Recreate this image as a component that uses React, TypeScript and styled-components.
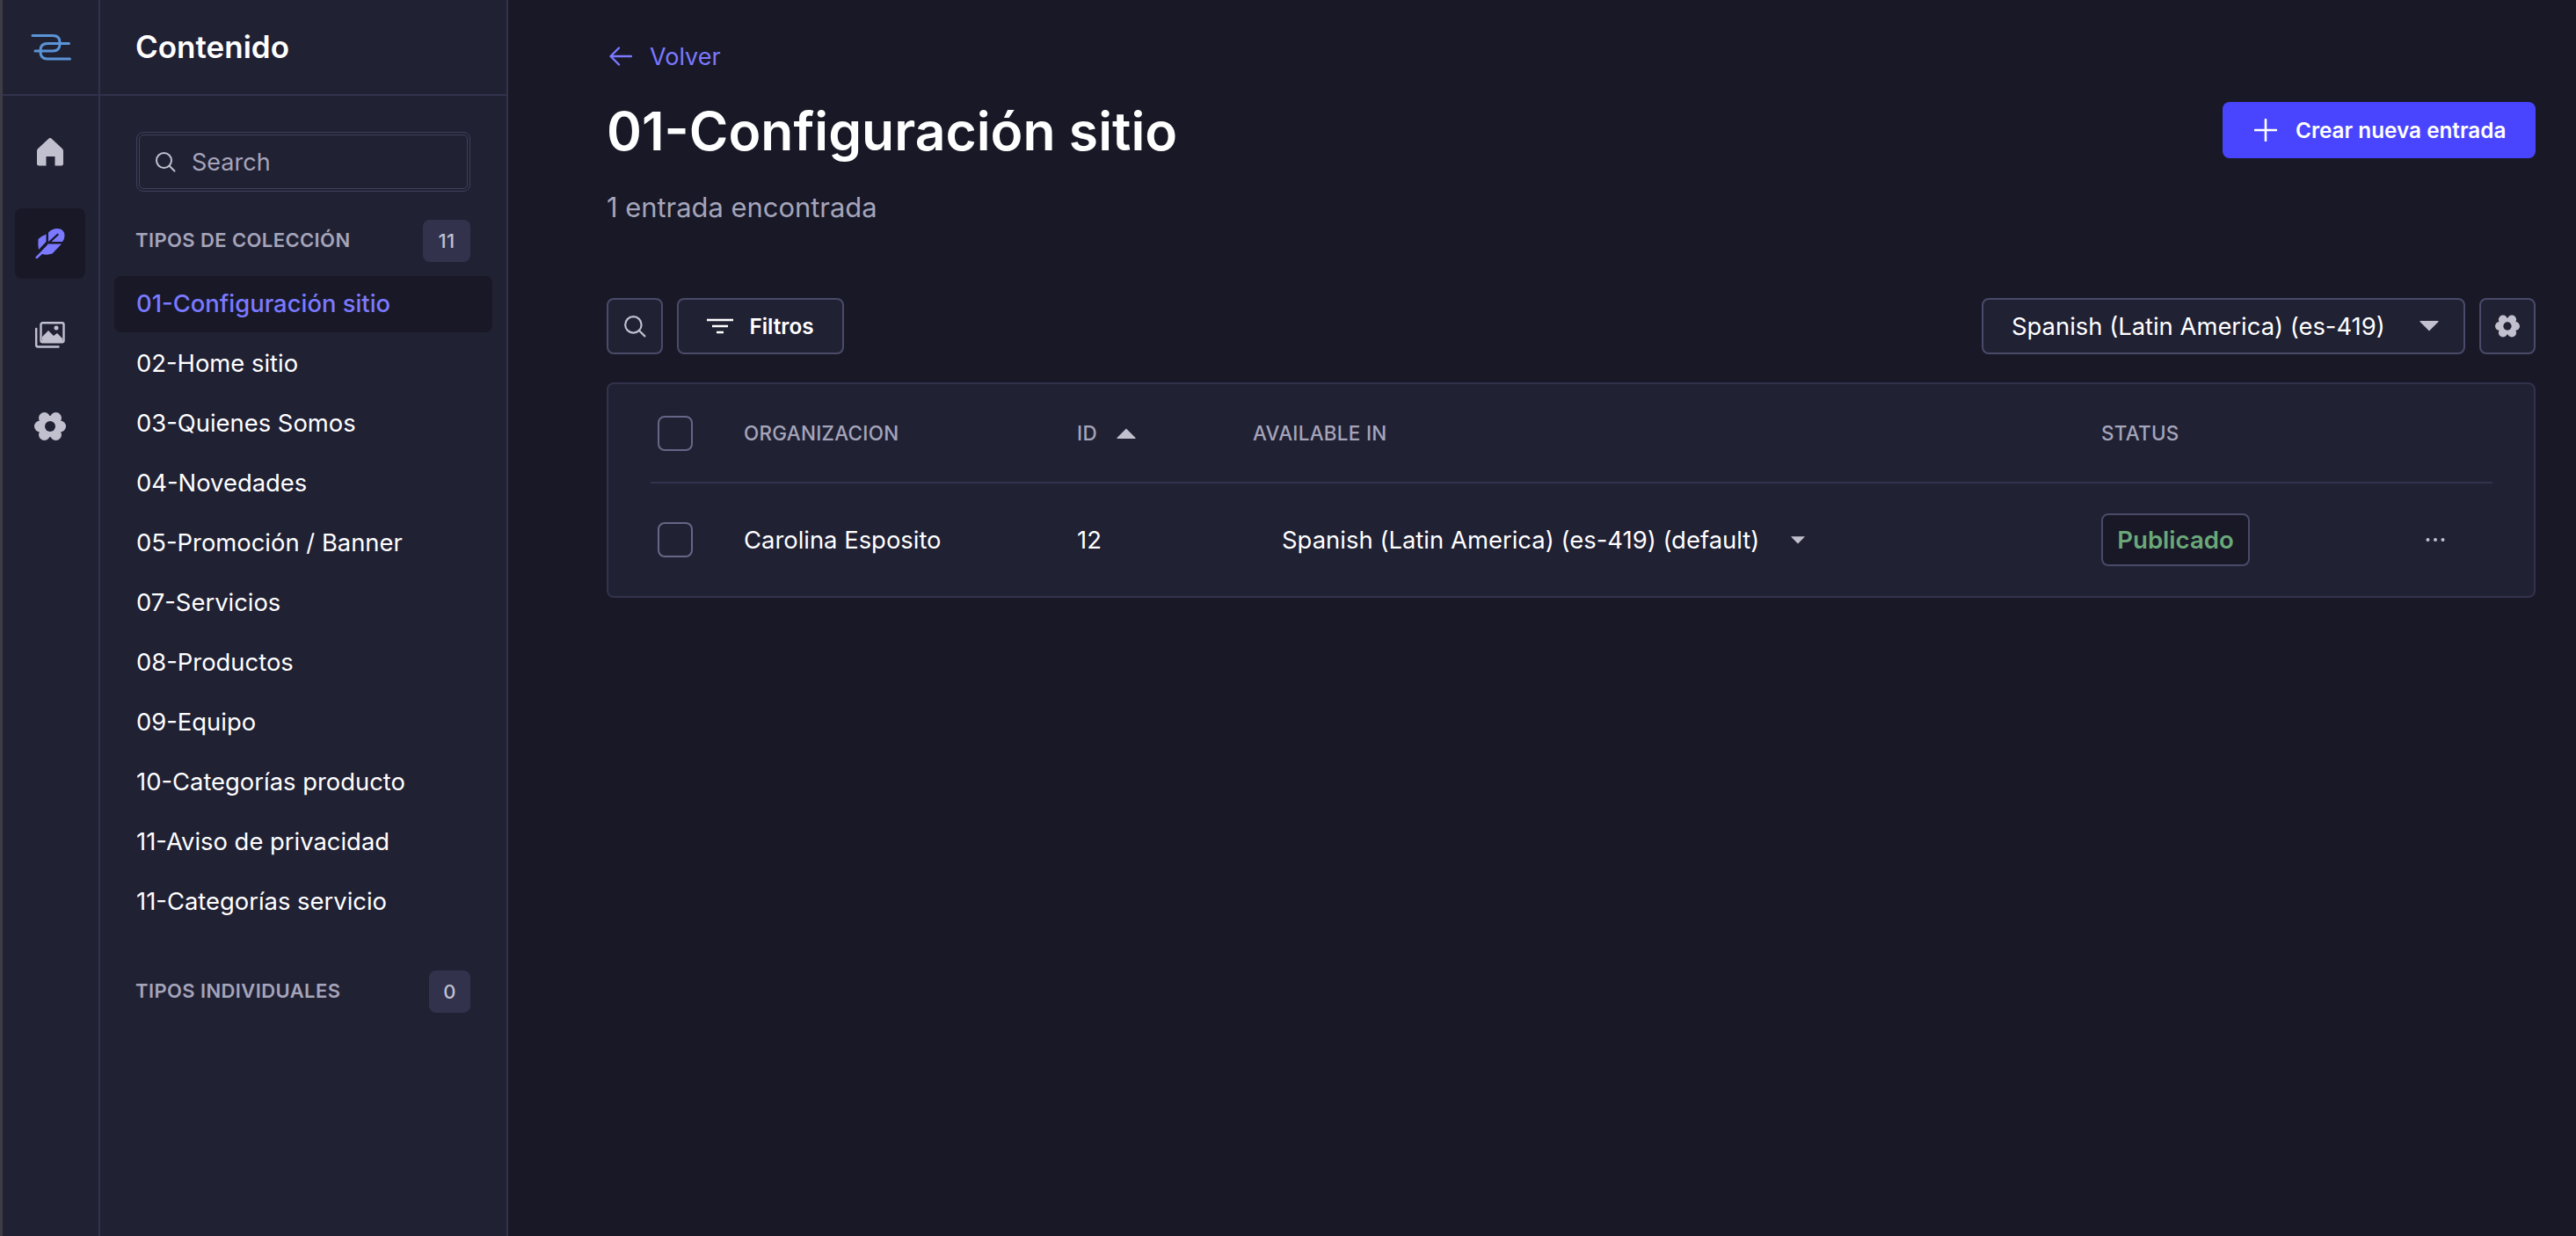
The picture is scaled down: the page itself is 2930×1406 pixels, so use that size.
import * as React from 'react';
import styled, { createGlobalStyle } from 'styled-components';

const GlobalStyle = createGlobalStyle`
    html, body {
        margin: 0;
        padding: 0;
        height: 100%;
        background: #181826;
    }

    body {
        font-family: Inter, "Liberation Sans", sans-serif;
        color: #ffffff;
    }
`;

const Page = styled.div`
    display: flex;
    width: 2930px;
    height: 1406px;
    overflow: hidden;
    background: #181826;
`;

const Rail = styled.nav`
    flex: 0 0 114px;
    box-sizing: border-box;
    background: #212134;
    border-left: 3px solid #3c3c46;
    border-right: 2px solid #32324d;
    display: flex;
    flex-direction: column;
    align-items: center;
`;

const RailLogo = styled.div`
    align-self: stretch;
    height: 109px;
    box-sizing: border-box;
    border-bottom: 2px solid #32324d;
    display: flex;
    align-items: center;
    justify-content: center;
`;

const RailList = styled.div`
    display: flex;
    flex-direction: column;
    gap: 24px;
    margin-top: 24px;
    padding-right: 2px;
`;

const RailItem = styled.div<{ $active?: boolean }>`
    width: 80px;
    height: 80px;
    border-radius: 8px;
    display: flex;
    align-items: center;
    justify-content: center;
    background: ${(p) => (p.$active ? '#181826' : 'transparent')};
`;

const SideNav = styled.aside`
    flex: 0 0 464px;
    box-sizing: border-box;
    background: #212134;
    border-right: 2px solid #32324d;
    display: flex;
    flex-direction: column;
`;

const SideHeader = styled.div`
    height: 109px;
    box-sizing: border-box;
    border-bottom: 2px solid #32324d;
    padding-left: 40px;
    display: flex;
    align-items: center;
    font-size: 35px;
    font-weight: 600;
    padding-bottom: 2px;
`;

const SearchBox = styled.div`
    margin: 41px 41px 0 41px;
    height: 68px;
    box-sizing: border-box;
    border: 4px double #3f3f5c;
    border-radius: 8px;
    display: flex;
    align-items: center;
    gap: 18px;
    padding-left: 17px;
    font-size: 27px;
    color: #a5a5ba;
`;

const SectionHead = styled.div<{ $top: number }>`
    margin: ${(p) => p.$top}px 41px 0 40px;
    display: flex;
    align-items: center;
    justify-content: space-between;
    font-size: 22px;
    font-weight: 600;
    color: #a5a5ba;
    letter-spacing: 0.4px;
`;

const SectionLabel = styled.span`
    padding-bottom: 3px;
`;

const CountBadge = styled.span<{ $wide?: boolean }>`
    min-width: ${(p) => (p.$wide ? 54 : 47)}px;
    height: 48px;
    border-radius: 8px;
    background: #32324d;
    display: flex;
    align-items: center;
    justify-content: center;
    font-size: 22px;
    font-weight: 500;
    color: #c0c0cf;
`;

const SideList = styled.div`
    margin: 16px 16px 0 16px;
    display: flex;
    flex-direction: column;
    gap: 4px;
`;

const SideItem = styled.div<{ $active?: boolean }>`
    height: 64px;
    border-radius: 8px;
    padding-left: 25px;
    padding-bottom: 2px;
    box-sizing: border-box;
    display: flex;
    align-items: center;
    font-size: 27.4px;
    color: ${(p) => (p.$active ? '#7b79ff' : '#ffffff')};
    background: ${(p) => (p.$active ? '#181826' : 'transparent')};
    font-weight: ${(p) => (p.$active ? 500 : 400)};
`;

const Main = styled.main`
    flex: 1;
    min-width: 0;
    box-sizing: border-box;
    padding: 44px 46px 0 112px;
`;

const BackLink = styled.div`
    height: 40px;
    display: flex;
    align-items: center;
    gap: 20px;
    padding-left: 3px;
    color: #7b79ff;
    font-size: 27px;
`;

const HeaderRow = styled.div`
    display: flex;
    justify-content: space-between;
    align-items: flex-start;
    margin-top: 32px;
`;

const TitleBlock = styled.div`
    margin-top: -4px;
`;

const Title = styled.h1`
    margin: 0;
    font-size: 60.6px;
    line-height: 74px;
    font-weight: 600;
`;

const Subtitle = styled.div`
    margin-top: 32px;
    font-size: 30.9px;
    line-height: 36px;
    color: #a5a5ba;
`;

const PrimaryButton = styled.div`
    width: 356px;
    height: 64px;
    box-sizing: border-box;
    border-radius: 8px;
    background: #4945ff;
    display: flex;
    align-items: center;
    padding-left: 36px;
    gap: 21px;
    font-size: 24.3px;
    font-weight: 600;
`;

const Toolbar = styled.div`
    display: flex;
    justify-content: space-between;
    margin-top: 85px;
`;

const ToolGroup = styled.div<{ $gap: number }>`
    display: flex;
    gap: ${(p) => p.$gap}px;
`;

const OutlineButton = styled.div<{ $width: number }>`
    width: ${(p) => p.$width}px;
    height: 64px;
    box-sizing: border-box;
    border: 2px solid #4a4a6a;
    border-radius: 8px;
    background: #212134;
    display: flex;
    align-items: center;
    justify-content: center;
    gap: 18px;
    font-size: 24.3px;
    font-weight: 600;
`;

const LocaleSelect = styled(OutlineButton)`
    justify-content: space-between;
    padding: 0 28px 0 32px;
    font-size: 27.4px;
    font-weight: 400;
`;

const TableCard = styled.section`
    margin-top: 32px;
    height: 245px;
    box-sizing: border-box;
    background: #212134;
    border: 2px solid #32324d;
    border-radius: 8px;
    padding: 0 47px 0 48px;
`;

const TableRow = styled.div<{ $head?: boolean }>`
    display: grid;
    grid-template-columns: 106px 379px 200px 965px 369px 1fr;
    align-items: center;
    height: ${(p) => (p.$head ? 113 : 128)}px;
    box-sizing: border-box;
    border-bottom: ${(p) => (p.$head ? '2px solid #32324d' : 'none')};
`;

const CheckBox = styled.div`
    width: 40px;
    height: 40px;
    margin-left: 8px;
    box-sizing: border-box;
    border: 2px solid #666687;
    border-radius: 8px;
    background: #212134;
`;

const HeadCell = styled.div`
    display: flex;
    align-items: center;
    gap: 22px;
    font-size: 22.4px;
    font-weight: 500;
    letter-spacing: 0.3px;
    color: #a5a5ba;
`;

const BodyCell = styled.div`
    font-size: 27.4px;
    color: #ffffff;
`;

const LocaleCell = styled(BodyCell)`
    display: flex;
    align-items: center;
    gap: 36px;
    padding-left: 33px;
    letter-spacing: 0.03px;
`;

const StatusBadge = styled.span`
    width: 169px;
    height: 60px;
    box-sizing: border-box;
    border: 2px solid #4a4a6a;
    border-radius: 8px;
    background: #181826;
    color: #6aa87a;
    display: flex;
    align-items: center;
    justify-content: center;
    font-size: 27.6px;
    font-weight: 600;
`;

const Caret = ({ w, h, up, color = '#c0c0cf' }: { w: number; h: number; up?: boolean; color?: string }) => (
    <svg width={w} height={h} viewBox="0 0 22 12">
        <path
            d={up ? 'M11 .5 L21.5 11 Q22 12 21 12 H1 Q0 12 .5 11Z' : 'M1 0 H21 Q22 0 21.5 1 L11 11.5 L.5 1 Q0 0 1 0Z'}
            fill={color}
        />
    </svg>
);

const Logo = () => (
    <svg width="46" height="32" viewBox="35 36 46 32" fill="none" stroke="#5a94d6" strokeWidth="3" strokeLinecap="round">
        <path d="M37 38.5H60Q68 38.5 68 46V48Q68 56 60 56H40" />
        <path d="M78.5 47.5H54Q46 47.5 46 55V57Q46 65 54 65H79.5" />
    </svg>
);

const HomeIcon = () => (
    <svg width="30" height="32" viewBox="0 0 30 32" fill="#c0c0cf">
        <path d="M13.6.6a2 2 0 0 1 2.8 0L28.8 12a4 4 0 0 1 1.2 3v14a2.500 2.500 0 0 1-2.500 2.500H20.500V21h-10v10.500H2.500A2.500 2.500 0 0 1 0 29V15a4 4 0 0 1 1.200-3Z" />
    </svg>
);

const FeatherIcon = () => (
    <svg width="34" height="35" viewBox="0 0 34 35" fill="#7b79ff">
        <path d="M3.500 12Q7 8.500 12.500 6.500V15L4 24Q3 17 3.500 12Z" />
        <path d="M15 4.500Q19 0 25 0Q33 0 33.500 8Q33.500 12 31 15H18.500L27 7L25.500 5.500L15 15Z" />
        <path d="M30 17.500L19.500 28.500Q14 30.500 8 29L2 34.500L0 33L14 18.500V17.500Z" />
    </svg>
);

const MediaIcon = () => (
    <svg width="34" height="30" viewBox="0 0 34 30" fill="none">
        <rect x="6.500" y="1.200" width="26" height="22" rx="2" stroke="#c0c0cf" strokeWidth="2.400" />
        <path d="M1.200 8V26.500A2 2 0 0 0 3.200 28.500H26.500" stroke="#c0c0cf" strokeWidth="2.400" strokeLinecap="round" />
        <path d="M8 21V17L15 10L21 16L25 13L31 19V22H8Z" fill="#c0c0cf" />
        <circle cx="24" cy="7" r="2.500" fill="#c0c0cf" />
    </svg>
);

const GearIcon = ({ w, h, hole }: { w: number; h: number; hole: string }) => (
    <svg width={w} height={h} viewBox="0 0 36 32" fill="#c0c0cf">
        <circle cx="18" cy="16" r="12" />
        <circle cx="6.500" cy="16" r="6.500" />
        <circle cx="29.500" cy="16" r="6.500" />
        <circle cx="11.500" cy="6.500" r="6.500" />
        <circle cx="24.500" cy="6.500" r="6.500" />
        <circle cx="11.500" cy="25.500" r="6.500" />
        <circle cx="24.500" cy="25.500" r="6.500" />
        <circle cx="18" cy="16" r="6" fill={hole} />
    </svg>
);

const SearchIcon = ({ size, color }: { size: number; color: string }) => (
    <svg width={size} height={size} viewBox="0 0 24 24" fill="none" stroke={color} strokeWidth="2" strokeLinecap="round">
        <circle cx="10.500" cy="10.500" r="8.500" />
        <path d="M17 17L22.500 22.500" />
    </svg>
);

const FilterIcon = () => (
    <svg width="30" height="18" viewBox="0 0 30 18" stroke="#ffffff" strokeWidth="2.600">
        <path d="M0 2H30M6 9H24M11 16H19" />
    </svg>
);

const PlusIcon = () => (
    <svg width="26" height="26" viewBox="0 0 26 26" stroke="#ffffff" strokeWidth="2.600" strokeLinecap="round">
        <path d="M13 1V25M1 13H25" />
    </svg>
);

const BackIcon = () => (
    <svg width="26" height="22" viewBox="0 0 26 22" fill="none" stroke="#7b79ff" strokeWidth="2.400" strokeLinecap="round" strokeLinejoin="round">
        <path d="M25 11H2M11 1.500L1.500 11L11 20.500" />
    </svg>
);

const DotsIcon = () => (
    <svg width="22" height="6" viewBox="0 0 22 6" fill="#c0c0cf">
        <circle cx="2.500" cy="3" r="2" />
        <circle cx="11" cy="3" r="2" />
        <circle cx="19.500" cy="3" r="2" />
    </svg>
);

const collections = [
    '01-Configuración sitio',
    '02-Home sitio',
    '03-Quienes Somos',
    '04-Novedades',
    '05-Promoción / Banner',
    '07-Servicios',
    '08-Productos',
    '09-Equipo',
    '10-Categorías producto',
    '11-Aviso de privacidad',
    '11-Categorías servicio'
];

export default function App() {
    return (
        <Page>
            <GlobalStyle />
            <Rail>
                <RailLogo>
                    <Logo />
                </RailLogo>
                <RailList>
                    <RailItem><HomeIcon /></RailItem>
                    <RailItem $active><FeatherIcon /></RailItem>
                    <RailItem><MediaIcon /></RailItem>
                    <RailItem><GearIcon w={36} h={32} hole="#212134" /></RailItem>
                </RailList>
            </Rail>
            <SideNav>
                <SideHeader>Contenido</SideHeader>
                <SearchBox>
                    <SearchIcon size={24} color="#c0c0cf" />
                    Search
                </SearchBox>
                <SectionHead $top={32}>
                    <SectionLabel>TIPOS DE COLECCIÓN</SectionLabel>
                    <CountBadge $wide>11</CountBadge>
                </SectionHead>
                <SideList>
                    {collections.map((name, i) => (
                        <SideItem key={name} $active={i === 0}>{name}</SideItem>
                    ))}
                </SideList>
                <SectionHead $top={46}>
                    <SectionLabel>TIPOS INDIVIDUALES</SectionLabel>
                    <CountBadge>0</CountBadge>
                </SectionHead>
            </SideNav>
            <Main>
                <BackLink>
                    <BackIcon />
                    Volver
                </BackLink>
                <HeaderRow>
                    <TitleBlock>
                        <Title>01-Configuración sitio</Title>
                        <Subtitle>1 entrada encontrada</Subtitle>
                    </TitleBlock>
                    <PrimaryButton>
                        <PlusIcon />
                        Crear nueva entrada
                    </PrimaryButton>
                </HeaderRow>
                <Toolbar>
                    <ToolGroup $gap={16}>
                        <OutlineButton $width={64}>
                            <SearchIcon size={26} color="#c0c0cf" />
                        </OutlineButton>
                        <OutlineButton $width={190}>
                            <FilterIcon />
                            Filtros
                        </OutlineButton>
                    </ToolGroup>
                    <ToolGroup $gap={16}>
                        <LocaleSelect $width={550}>
                            Spanish (Latin America) (es-419)
                            <Caret w={22} h={12} />
                        </LocaleSelect>
                        <OutlineButton $width={64}>
                            <GearIcon w={28} h={26} hole="#212134" />
                        </OutlineButton>
                    </ToolGroup>
                </Toolbar>
                <TableCard>
                    <TableRow $head>
                        <CheckBox />
                        <HeadCell>ORGANIZACION</HeadCell>
                        <HeadCell>ID <Caret w={22} h={12} up /></HeadCell>
                        <HeadCell>AVAILABLE IN</HeadCell>
                        <HeadCell>STATUS</HeadCell>
                        <span />
                    </TableRow>
                    <TableRow>
                        <CheckBox />
                        <BodyCell>Carolina Esposito</BodyCell>
                        <BodyCell>12</BodyCell>
                        <LocaleCell>
                            Spanish (Latin America) (es-419) (default)
                            <Caret w={16} h={9} />
                        </LocaleCell>
                        <div><StatusBadge>Publicado</StatusBadge></div>
                        <DotsIcon />
                    </TableRow>
                </TableCard>
            </Main>
        </Page>
    );
}
